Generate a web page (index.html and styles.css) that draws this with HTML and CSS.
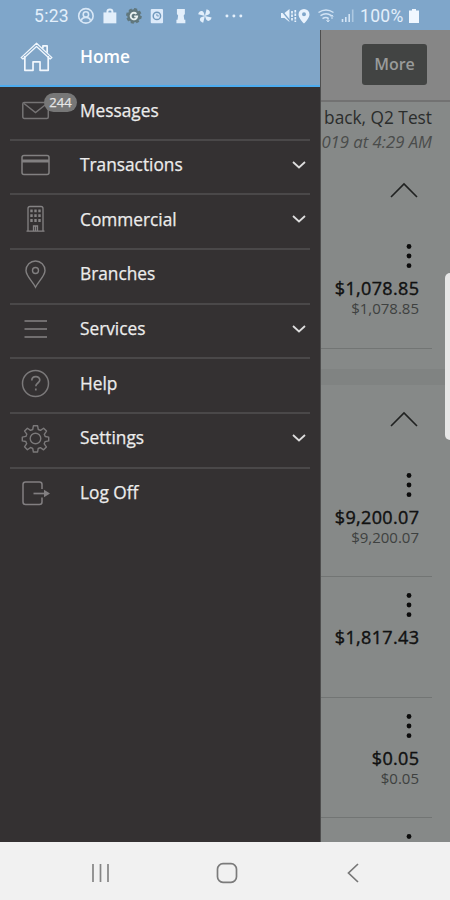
FILE: index.html
```
<!DOCTYPE html>
<html lang="en">
<head>
<meta charset="utf-8">
<meta name="viewport" content="width=device-width, initial-scale=1">
<title>Accounts</title>
<link rel="stylesheet" href="styles.css">
</head>
<body>
<header class="status">
  <span class="clock">5:23</span>
  <div class="notices">
    <svg viewBox="0 0 24 24"><g fill="none" stroke="#d9e8f7" stroke-width="1.600"><circle cx="12" cy="12" r="7.300"/><circle cx="12" cy="10.500" r="2.700"/><path d="M7.500 17c0-4.500 9-4.500 9 0"/></g></svg>
    <svg viewBox="0 0 24 24"><path d="M5.500 8.500h13v11h-13z" fill="#e3effb"/><path d="M9.500 9V7.500a2.500 2 0 0 1 5 0V9" fill="none" stroke="#e3effb" stroke-width="2"/></svg>
    <svg viewBox="0 0 24 24"><circle cx="12" cy="12" r="6.700" fill="#60777d" stroke="#60777d" stroke-width="2.500" stroke-dasharray="3 2.260"/><path d="M14.500 10a3.300 3.300 0 1 0 .8 2.500h-3" fill="none" stroke="#e8f0ef" stroke-width="1.900"/></svg>
    <svg viewBox="0 0 24 24"><rect x="5.800" y="5" width="12.400" height="14.500" rx="1" fill="#dceafa"/><circle cx="12" cy="12" r="3.700" fill="none" stroke="#7199bd" stroke-width="1.500"/><path d="M12 10v2h2" fill="none" stroke="#7199bd"/></svg>
    <svg viewBox="0 0 24 24"><path d="M8 5h8v5l-1.200 1.500.6 4.500H16.500v3.500h-9V16h1.100l.6-4.500L8 10z" fill="#e3effb"/></svg>
    <svg viewBox="0 0 24 24"><g fill="#e3effb" transform="rotate(14 12 12)"><path d="M12 12V5c4 0 5 3 3.300 4.800z"/><path d="M12 12V5c4 0 5 3 3.300 4.800z" transform="rotate(90 12 12)"/><path d="M12 12V5c4 0 5 3 3.300 4.800z" transform="rotate(180 12 12)"/><path d="M12 12V5c4 0 5 3 3.300 4.800z" transform="rotate(270 12 12)"/></g></svg>
    <svg class="dots" viewBox="0 0 24 24"><g fill="#e3effb"><circle cx="5" cy="12" r="1.500"/><circle cx="12" cy="12" r="1.500"/><circle cx="19" cy="12" r="1.500"/></g></svg>
  </div>
  <div class="signals">
    <svg class="mute" width="18" height="18" viewBox="0 0 18 18"><path d="M1 6h3.500L9.500 2v13l-5-4H1z" fill="#e8f2fd"/><path d="M1 3l10 12" stroke="#7fa5ca" stroke-width="1.300"/><path d="M12 4v10M15.300 3v12" stroke="#e8f2fd" stroke-width="1.700" stroke-dasharray="2.500 1"/></svg>
    <svg width="14" height="18" viewBox="0 0 14 18"><path fill-rule="evenodd" d="M7 2a5.500 5.500 0 0 1 5.500 5.500C12.500 11.500 7 16.500 7 16.500S1.500 11.500 1.500 7.500A5.500 5.500 0 0 1 7 2zm0 3.300a2 2 0 1 0 0 4 2 2 0 0 0 0-4z" fill="#e8f2fd"/></svg>
    <svg class="wifi" width="20" height="18" viewBox="0 0 20 18"><g fill="none" stroke="#d3e4f5" stroke-width="1.500"><path d="M1.500 5.500q7.500-5 15 0M3.500 8.700q5.500-3.700 11 0M5.500 11.700q3.500-2.500 6 0"/></g><path d="M11 10.500v4M9.500 13l1.500 2 1.500-2M15 12V8M13.800 9.500L15 8l1.200 1.500" stroke="#d3e4f5" fill="none"/></svg>
    <svg width="14" height="18" viewBox="0 0 14 18"><path d="M1.500 15v-3M4.800 15v-5M8.200 15V7" stroke="#d3e4f5" stroke-width="1.600"/><path d="M11.700 15V2.500" stroke="#adc8e1" stroke-width="1.600"/></svg>
    <span class="percent">100%</span>
    <svg class="battery" width="12" height="18" viewBox="0 0 12 18"><path d="M4 2h4v1.500h3V16H1V3.500h3z" fill="#f0f7ff"/></svg>
  </div>
</header>
<main class="screen">
  <nav class="drawer">
    <a class="item home">
      <svg class="icon" viewBox="0 0 32 32"><g fill="none" stroke="#f1f7fd" stroke-width="1.600" stroke-linejoin="round"><path d="M5.500 16v13.500h7.700v-8h6.600v8h7.700V16"/><path d="M2 17.500L16.500 4 31 17.500l-1.700 1.300L16.500 7 3.700 18.800z" stroke-width="1.200"/><path d="M22.500 9V6.500h4V13"/></g></svg>
      <span>Home</span>
    </a>
    <a class="item messages">
      <svg class="icon" viewBox="0 0 32 32"><g fill="none" stroke="#767475" stroke-width="1.500"><rect x="3.800" y="8.500" width="25.500" height="16" rx="1.500"/><path d="M5 9.500l11.500 9L28 9.500"/></g></svg>
      <span>Messages</span><b class="badge">244</b>
    </a>
    <a class="item">
      <svg class="icon" viewBox="0 0 32 32"><g fill="none" stroke="#828081"><rect x="3" y="6.500" width="27" height="19" rx="2" stroke-width="1.500"/><path d="M3 12h27" stroke-width="3"/></g></svg>
      <span>Transactions</span><svg class="chev" viewBox="0 0 16 10"><path d="M2 2l6 5.500L14 2"/></svg>
    </a>
    <a class="item">
      <svg class="icon" viewBox="0 0 32 32"><g fill="none" stroke="#858384" stroke-width="1.300"><path d="M9 28V5.500q0-2 2-2h11q2 0 2 2V28M7.500 28.200h18M14.500 28v-5h4v5M16.500 23v5"/><path d="M12.500 6.500v14M16.500 6.500v14M20.500 6.500v14" stroke-width="2.400" stroke-dasharray="2.800 2"/></g></svg>
      <span>Commercial</span><svg class="chev" viewBox="0 0 16 10"><path d="M2 2l6 5.500L14 2"/></svg>
    </a>
    <a class="item">
      <svg class="icon" viewBox="0 0 32 32"><g fill="none" stroke="#828081" stroke-width="1.400"><path d="M16.500 29.200C14 24 7 18 7 12.500a9.500 9.500 0 0 1 19 0c0 5.500-7 11.500-9.500 16.700z"/><circle cx="16.500" cy="12.500" r="3"/></g></svg>
      <span>Branches</span>
    </a>
    <a class="item">
      <svg class="icon" viewBox="0 0 32 32"><path d="M5.500 8h22.500M5.500 16h22.500M5.500 24h22.500" stroke="#858384" stroke-width="1.600"/></svg>
      <span>Services</span><svg class="chev" viewBox="0 0 16 10"><path d="M2 2l6 5.500L14 2"/></svg>
    </a>
    <a class="item">
      <svg class="icon" viewBox="0 0 32 32"><g fill="none" stroke="#7b797a" stroke-width="1.500"><circle cx="16.500" cy="16.500" r="13"/><path d="M12.800 13.500c0-5 8-5 8-.5 0 3-4 3-4 6.200M16.800 21.500v2" stroke-width="1.700"/></g></svg>
      <span>Help</span>
    </a>
    <a class="item">
      <svg class="icon" viewBox="0 0 32 32"><g fill="none" stroke="#7b797a" stroke-width="1.400" stroke-linejoin="round"><circle cx="16.500" cy="16.500" r="5.300"/><path d="M14.400 3.800h4.200l.7 3.700 2.200.9 3.100-2.200 2.900 2.900-2.200 3.200.9 2.200 3.500.6v3.800l-3.600.7-.9 2.200 2.200 3.100-2.800 2.900-3.200-2.200-2.200.9-.6 3.500h-4.200l-.7-3.600-2.200-.9-3.100 2.200-2.900-2.900 2.200-3.100-.9-2.200-3.500-.6v-3.800l3.600-.7.9-2.200-2.200-3.100 2.800-2.900 3.100 2.200 2.200-.9z"/></g></svg>
      <span>Settings</span><svg class="chev" viewBox="0 0 16 10"><path d="M2 2l6 5.500L14 2"/></svg>
    </a>
    <a class="item last">
      <svg class="icon" viewBox="0 0 32 32"><path d="M23 12V7.500Q23 5 20.500 5h-14Q4 5 4 7.500V25q0 2.500 2.500 2.500h14Q23 27.500 23 25v-4.500" fill="none" stroke="#827f81" stroke-width="1.500"/><path d="M14.500 16.500H26" stroke="#827f81" stroke-width="1.700"/><path d="M25 12.800l6 3.700-6 3.700z" fill="#827f81"/></svg>
      <span>Log Off</span>
    </a>
  </nav>
  <section class="page">
    <div class="toolbar"><button class="more">More</button></div>
    <div class="welcome"><p>back, Q2 Test</p><p class="when">019 at 4:29 AM</p></div>
    <svg class="fold" viewBox="0 0 28 16"><path d="M1 15L14 2l13 13"/></svg>
    <article class="account first"><svg class="kebab" viewBox="0 0 6 26"><circle cx="3" cy="3.500" r="2.400"/><circle cx="3" cy="13" r="2.400"/><circle cx="3" cy="22.700" r="2.400"/></svg><strong>$1,078.85</strong><small>$1,078.85</small></article>
    <div class="gap"></div>
    <svg class="fold second" viewBox="0 0 28 16"><path d="M1 15L14 2l13 13"/></svg>
    <article class="account first"><svg class="kebab" viewBox="0 0 6 26"><circle cx="3" cy="3.500" r="2.400"/><circle cx="3" cy="13" r="2.400"/><circle cx="3" cy="22.700" r="2.400"/></svg><strong>$9,200.07</strong><small>$9,200.07</small></article>
    <article class="account"><svg class="kebab" viewBox="0 0 6 26"><circle cx="3" cy="3.500" r="2.400"/><circle cx="3" cy="13" r="2.400"/><circle cx="3" cy="22.700" r="2.400"/></svg><strong>$1,817.43</strong></article>
    <article class="account"><svg class="kebab" viewBox="0 0 6 26"><circle cx="3" cy="3.500" r="2.400"/><circle cx="3" cy="13" r="2.400"/><circle cx="3" cy="22.700" r="2.400"/></svg><strong>$0.05</strong><small>$0.05</small></article>
    <article class="account"><svg class="kebab" viewBox="0 0 6 26"><circle cx="3" cy="3.500" r="2.400"/><circle cx="3" cy="13" r="2.400"/><circle cx="3" cy="22.700" r="2.400"/></svg></article>
  </section>
  <div class="edge"></div>
</main>
<footer class="navbar">
  <svg viewBox="0 0 24 24"><path d="M4 3v18M11.500 3v18M19 3v18" stroke="#858585" stroke-width="1.700"/></svg>
  <svg viewBox="0 0 24 24"><rect x="2.500" y="2.700" width="19" height="18.600" rx="5.500" fill="none" stroke="#7b7b7b" stroke-width="1.700"/></svg>
  <svg viewBox="0 0 24 24"><path d="M17 3L7.500 12l9.500 9" fill="none" stroke="#777" stroke-width="1.700"/></svg>
</footer>
</body>
</html>
```
FILE: styles.css
```
* { box-sizing: border-box; }
body { margin: 0; width: 450px; height: 900px; overflow: hidden; display: flex; flex-direction: column; font-family: "Open Sans", sans-serif; background: #f1f1f1; }
p { margin: 0; }
svg { display: block; flex: none; }

.status { flex: none; height: 30px; display: flex; align-items: center; background: #7fa6ca; color: #e3effb; font: 17.5px Roboto, sans-serif; padding: 1px 31px 0 34px; }
.clock { width: 40px; letter-spacing: .3px; }
.notices { display: flex; }
.notices svg { width: 23.8px; height: 23.8px; }
.notices .dots { margin-left: 5px; }
.signals { display: flex; align-items: center; margin-left: auto; }
.mute { margin-right: -1px; }
.wifi { margin: 0 4px 0 6px; }
.percent { margin-left: 5px; letter-spacing: .3px; width: 48px; }
.battery { margin-right: -1px; }

.screen { position: relative; flex: none; height: 812px; display: flex; overflow: hidden; }
.drawer { width: 321px; flex: none; background: #343132; border-right: 1px solid #4e4e4e; }
.item { position: relative; display: flex; align-items: center; height: 54.7px; margin: 0 10px; padding: 0 3px 5px 9px; border-bottom: 2px solid #4a4849; color: #ececec; font-size: 17.3px; -webkit-text-stroke: .25px #ececec; }
.item .icon { width: 32px; height: 32px; margin-right: 29px; }
.item span { flex: 1; }
.home { height: 57px; margin: 0; padding: 0 0 2px 19px; background: #80a5c7; border-bottom: 2px solid #4dacef; color: #fff; font-weight: 600; -webkit-text-stroke: 0; }
.home .icon { width: 34px; height: 34px; margin: 0 27px 2px 0; }
.messages { height: 53.7px; padding-bottom: 5px; }
.last { border: 0; padding-bottom: 7px; }
.badge { position: absolute; left: 34px; top: 6px; width: 33px; height: 19px; border-radius: 10px; background: #777; color: #e2e2e2; font-size: 13px; line-height: 19px; text-align: center; font-weight: 400; }
.chev { width: 16px; height: 10px; }
.chev path { fill: none; stroke: #ddd; stroke-width: 1.8; }

.page { flex: 1; background: #868988; display: flex; flex-direction: column; align-items: flex-end; color: #111; padding-right: 18px; }
.toolbar { height: 72px; width: 129px; margin-right: -18px; flex: none; background: #868686; border-bottom: 2px solid #727272; padding: 14px 23px 0 41px; }
.more { width: 65px; height: 41px; border: 0; border-radius: 3px; background: #424443; color: #999b9a; font: 600 16px "Open Sans", sans-serif; padding: 0 0 2px; }
.welcome { flex: none; height: 80px; padding-top: 4px; text-align: right; white-space: nowrap; font-size: 17.3px; line-height: 24px; color: #2b2d2c; }
.when { font-style: italic; font-size: 16.7px; color: #4a4c4b; }
.fold { width: 28px; height: 16px; margin-right: 14px; }
.fold path { fill: none; stroke: #202221; stroke-width: 1.6; }
.account { flex: none; width: 111px; height: 120.5px; border-bottom: 1px solid #727574; padding: 15px 13px 0 0; display: flex; flex-direction: column; align-items: flex-end; }
.account.first { height: 150.5px; padding-top: 45px; }
.kebab { width: 6px; height: 26px; margin-right: 7px; fill: #0d0d0d; }
.account strong { font-size: 18px; line-height: 22px; font-weight: 400; letter-spacing: .35px; -webkit-text-stroke: .4px #111; margin: 8px -.4px 0 0; }
.account small { font-size: 15px; line-height: 18px; color: #3e4140; }
.gap { flex: none; width: 129px; height: 16px; margin: 20px -18px 0 0; background: #808382; }
.fold.second { margin-top: 26px; }
.edge { position: absolute; right: -5px; top: 243px; width: 10px; height: 167px; border-radius: 5px; background: #e7e7e7; }

.navbar { flex: 1; display: flex; justify-content: space-between; align-items: center; padding: 4px 85px 0 89px; background: #f1f1f1; }
.navbar svg { width: 24px; height: 24px; }
```
